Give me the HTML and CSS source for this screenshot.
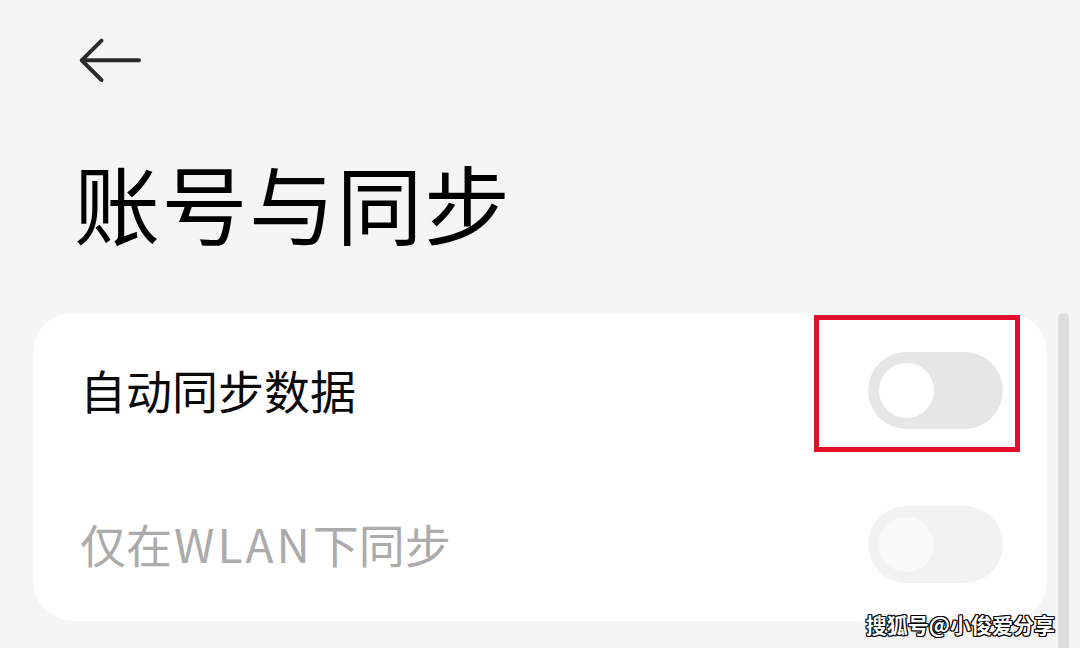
FILE: index.html
```html
<!DOCTYPE html>
<html lang="zh-CN">
<head>
<meta charset="utf-8">
<title>账号与同步</title>
<link rel="stylesheet" href="styles.css">
</head>
<body>
<div class="page">
  <header class="header">
    <svg class="back" width="68" height="50" viewBox="0 0 68 50" aria-label="返回">
      <path d="M25.5 4.7 L5.7 24.3 L25.5 44 M5.7 24.3 H63" fill="none" stroke="#2b2b2b" stroke-width="4" stroke-linecap="round" stroke-linejoin="round"/>
    </svg>
  </header>
  <h1 class="title">账号与同步</h1>
  <div class="content">
    <div class="card">
      <div class="row">
        <span class="label">自动同步数据</span>
        <span class="switch"><span class="knob"></span></span>
      </div>
      <div class="row disabled">
        <span class="label">仅在<span class="latin">WLAN</span>下同步</span>
        <span class="switch"><span class="knob"></span></span>
      </div>
      <div class="highlight"></div>
    </div>
    <div class="scrollbar"></div>
  </div>
  <div class="watermark">搜狐号@小俊爱分享</div>
</div>
</body>
</html>
```

FILE: styles.css
```css
* { box-sizing: border-box; }
html, body { margin: 0; padding: 0; }
body {
  background: #f5f5f5;
  font-family: "Noto Sans CJK SC", "Noto Sans", sans-serif;
  color: #000;
}
.page {
  position: relative;
  width: 1080px;
  height: 648px;
  overflow: hidden;
  display: flex;
  flex-direction: column;
}
.header {
  padding: 36px 0 0 76px;
  height: 86px;
}
.back { display: block; }
.title {
  margin: 66px 0 0 74px;
  font-size: 86px;
  line-height: 100px;
  height: 100px;
  font-weight: 400;
  letter-spacing: 1.5px;
  color: #000;
}
.content {
  margin-top: 61px;
  display: flex;
  align-items: flex-start;
  flex: 1;
}
.card {
  position: relative;
  margin-left: 33px;
  width: 1014px;
  height: 308px;
  background: #fff;
  border-radius: 40px;
  display: flex;
  flex-direction: column;
}
.row {
  height: 154px;
  display: flex;
  align-items: center;
  justify-content: space-between;
  padding: 0 44px 0 47px;
}
.label {
  font-size: 46px;
  line-height: 60px;
  color: #0a0a0a;
  margin-top: -3px;
}
.latin {
  letter-spacing: 3px;
  margin-left: 2px;
}
.switch {
  width: 135px;
  height: 77px;
  border-radius: 39px;
  background: #e6e6e6;
  padding: 11px;
  display: flex;
  align-items: center;
}
.knob {
  width: 55px;
  height: 55px;
  border-radius: 50%;
  background: #fff;
}
.disabled .label { color: #ababab; }
.disabled .switch { background: #f2f2f2; }
.disabled .knob { background: #f9f9f9; }
.highlight {
  position: absolute;
  left: 781px;
  top: 2px;
  width: 206px;
  height: 137px;
  border: 5px solid #e3102b;
}
.scrollbar {
  margin-left: 11px;
  width: 11px;
  height: 400px;
  border-radius: 6px;
  background: #dddddd;
}
.watermark {
  position: absolute;
  right: 25px;
  bottom: 9px;
  font-size: 21px;
  line-height: 30px;
  font-weight: 700;
  color: #fff;
  text-shadow: 1px 1px 0 #000, -1px -1px 0 #000, 1px -1px 0 #000, -1px 1px 0 #000, 1px 0 0 #000, -1px 0 0 #000, 0 1px 0 #000, 0 -1px 0 #000;
}
```
